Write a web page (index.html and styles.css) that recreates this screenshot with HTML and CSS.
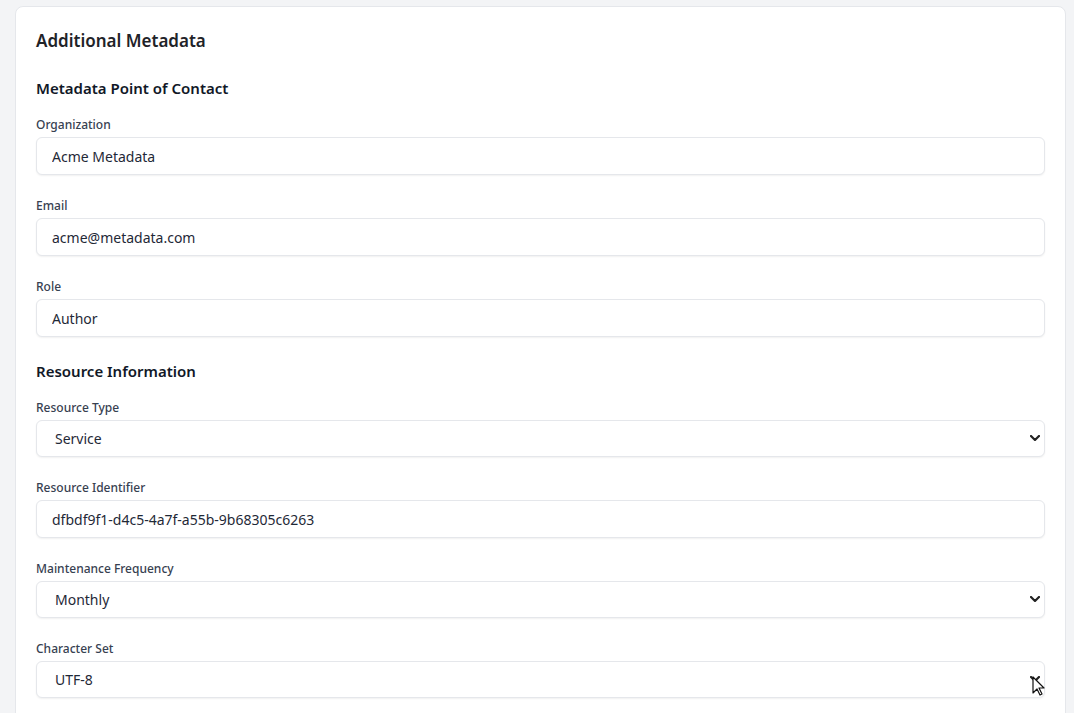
FILE: index.html
```html
<!DOCTYPE html>
<html lang="en">
<head>
<meta charset="utf-8">
<title>Additional Metadata</title>
<link rel="stylesheet" href="styles.css">
</head>
<body>
<div class="card">
  <h2 class="title">Additional Metadata</h2>

  <h3 class="section">Metadata Point of Contact</h3>
  <div class="field">
    <label class="label">Organization</label>
    <input class="input" type="text" value="Acme Metadata">
  </div>
  <div class="field">
    <label class="label">Email</label>
    <input class="input" type="text" value="acme@metadata.com">
  </div>
  <div class="field">
    <label class="label">Role</label>
    <input class="input" type="text" value="Author">
  </div>

  <h3 class="section section-gap">Resource Information</h3>
  <div class="field">
    <label class="label">Resource Type</label>
    <div class="select-wrap">
      <select class="select"><option>Service</option></select>
      <svg class="chevron" viewBox="0 0 10 6" width="10" height="6"><path d="M1 1l4 4 4-4" fill="none" stroke="#222" stroke-width="2.2" stroke-linecap="round" stroke-linejoin="round"/></svg>
    </div>
  </div>
  <div class="field">
    <label class="label">Resource Identifier</label>
    <input class="input" type="text" value="dfbdf9f1-d4c5-4a7f-a55b-9b68305c6263">
  </div>
  <div class="field">
    <label class="label">Maintenance Frequency</label>
    <div class="select-wrap">
      <select class="select"><option>Monthly</option></select>
      <svg class="chevron" viewBox="0 0 10 6" width="10" height="6"><path d="M1 1l4 4 4-4" fill="none" stroke="#222" stroke-width="2.2" stroke-linecap="round" stroke-linejoin="round"/></svg>
    </div>
  </div>
  <div class="field">
    <label class="label">Character Set</label>
    <div class="select-wrap">
      <select class="select"><option>UTF-8</option></select>
      <svg class="chevron" viewBox="0 0 10 6" width="10" height="6"><path d="M1 1l4 4 4-4" fill="none" stroke="#222" stroke-width="2.2" stroke-linecap="round" stroke-linejoin="round"/></svg>
      <svg class="cursor" viewBox="0 0 13 20" width="13" height="20"><path d="M1 1v16l4-4 3 6 2-1-3-6h5z" fill="#fff" stroke="#111" stroke-width="1.2" stroke-linejoin="round"/></svg>
    </div>
  </div>
</div>
</body>
</html>
```

FILE: styles.css
```css
* { box-sizing: border-box; }

html, body {
  margin: 0;
  height: 100%;
  overflow: hidden;
}

body {
  background: #f3f4f6;
  padding: 6px 8px 0 15px;
  font-family: "Noto Sans", "Open Sans", sans-serif;
  color: #111827;
}

.card {
  background: #fff;
  border: 1px solid #e5e7eb;
  border-radius: 8px;
  padding: 20px 20px 40px;
  min-height: 760px;
}

.title {
  margin: 0 0 21px;
  font-size: 17px;
  line-height: 28px;
  font-weight: 600;
  color: #1f2328;
}

.section {
  margin: 0 0 16px;
  font-size: 15px;
  line-height: 24px;
  font-weight: 600;
  color: #111827;
}

.section-gap {
  margin-top: 2px;
}

.field {
  margin-bottom: 22px;
}

.label {
  display: block;
  margin-bottom: 3px;
  font-size: 12px;
  line-height: 18px;
  font-weight: 500;
  color: #374151;
}

.input,
.select {
  display: block;
  width: 100%;
  height: 38px;
  margin: 0;
  border: 1px solid #e5e7eb;
  border-radius: 6px;
  background: #fff;
  box-shadow: 0 1px 2px rgba(0, 0, 0, 0.06);
  font-family: inherit;
  font-size: 14px;
  color: #1f2937;
  padding: 0 15px;
  outline: none;
}

.select {
  height: 37px;
  padding-left: 18px;
  -webkit-appearance: none;
  appearance: none;
}

.select-wrap {
  position: relative;
}

.chevron {
  position: absolute;
  right: 5px;
  top: 15px;
  pointer-events: none;
}

.cursor {
  position: absolute;
  left: 996px;
  top: 15px;
  pointer-events: none;
}
```
